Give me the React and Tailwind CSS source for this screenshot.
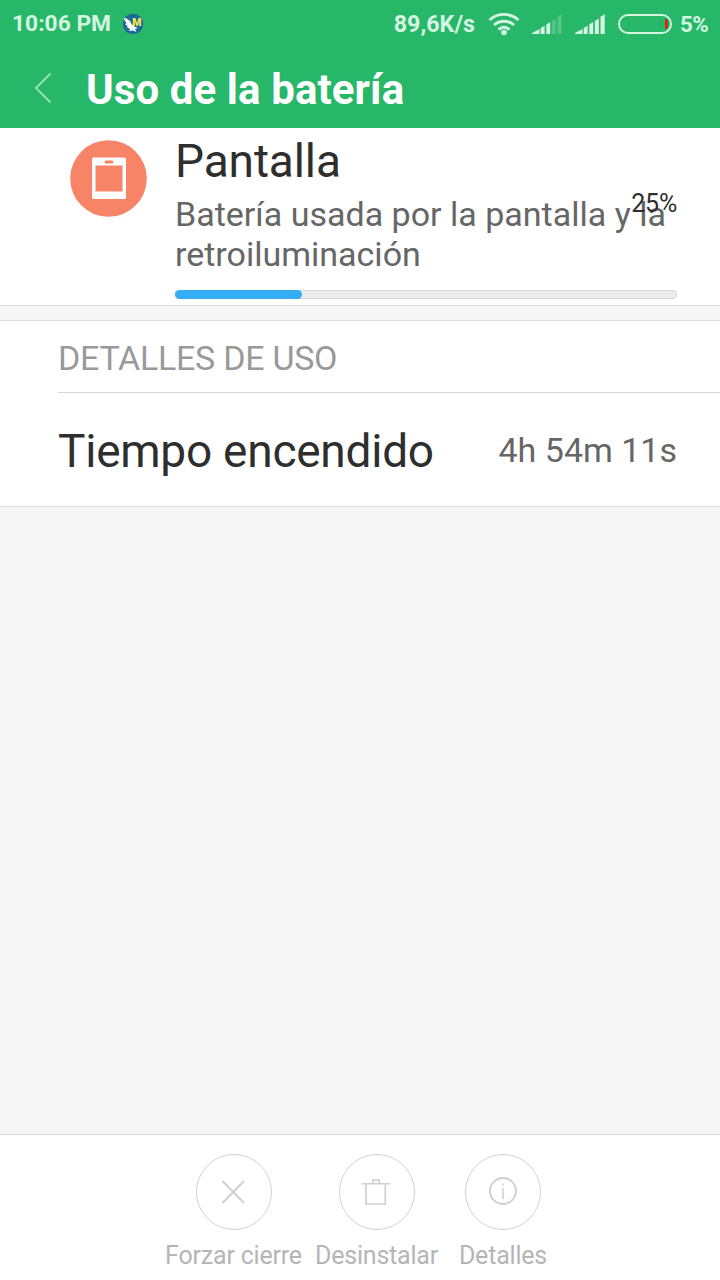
import { clsx } from 'clsx';

const ACTIONS = [
  { id: 'stop', label: 'Forzar cierre', width: 'w-[143px]', Icon: CloseIcon },
  { id: 'uninstall', label: 'Desinstalar', width: 'w-[143px]', Icon: TrashIcon },
  { id: 'details', label: 'Detalles', width: 'w-[110px]', Icon: InfoIcon },
];

function CloseIcon() {
  return (
    <svg viewBox="0 0 74 74" className="w-full h-full" fill="none" stroke="currentColor" strokeWidth="1.8">
      <path d="M25.5 26l21.5 22M47 26L25.5 48" />
    </svg>
  );
}

function TrashIcon() {
  return (
    <svg viewBox="0 0 74 74" className="w-full h-full" fill="none" stroke="currentColor" strokeWidth="1.6">
      <path d="M21.700 28.700h28.500M26 28.700v20.300h19.300V28.700M32.800 28.700v-3.700h6.500v3.700" />
    </svg>
  );
}

function InfoIcon() {
  return (
    <svg viewBox="0 0 74 74" className="w-full h-full" fill="none" stroke="currentColor">
      <circle cx="37" cy="36" r="13" strokeWidth="1.8" />
      <path d="M37 33v11M37 28.500v2" strokeWidth="1.5" />
    </svg>
  );
}

function SignalIcon({ level }) {
  const bars = [
    'M0 21v-1l7.500-4v5z',
    'M8.700 21v-6l3.900-2.200V21z',
    'M14.300 21v-9.500l3.900-2.500V21z',
    'M19.900 21V8l3.900-2.600V21z',
    'M25.500 21V3.800L29.700 1v20z',
  ];
  return (
    <svg viewBox="0 0 30 22" className="w-[30px] h-[22px] fill-current">
      {bars.map((d, i) => (
        <path key={d} d={d} opacity={i < level ? 1 : 0.25} />
      ))}
    </svg>
  );
}

function StatusBar() {
  return (
    <div className="flex items-center h-12 pl-3 text-[22.8px] font-bold text-[#d4f5e0]">
      <span className="w-[99px] pt-px whitespace-nowrap">10:06 PM</span>
      <svg viewBox="0 0 22 22" className="w-[22px] h-[22px] ml-[11px]">
        <circle cx="11" cy="11" r="10.200" fill="#1d6898" />
        <path d="M1.500 5l3 .5 3.500 2.500 2 4 2-1v2.500l4 1.500-3 1 1.500 3-3.500-1.500-4 .500 1-2-3.500-2 1.500-.5-3-2.500 1.500-.5z" fill="#fff" />
        <text x="10.300" y="12.800" fontSize="10.500" fontWeight="900" fill="#f3e94b">M</text>
      </svg>
      <span className="ml-auto pt-px text-[23.3px] whitespace-nowrap">89,6K/s</span>
      <svg viewBox="0 0 32 24" className="w-8 h-6 ml-[13px]" fill="none" stroke="currentColor" strokeWidth="2.8">
        <path d="M1.500 8c8.500-7.500 20.500-7.500 29 0M6 13c6-5 14-5 20 0M10.500 17.600c3.500-2.900 7.500-2.900 11 0" />
        <circle cx="16" cy="20.500" r="2.800" fill="currentColor" stroke="none" />
      </svg>
      <div className="ml-3"><SignalIcon level={3} /></div>
      <div className="ml-[13px]"><SignalIcon level={5} /></div>
      <div className="flex items-center justify-end w-[54px] h-5 ml-[13px] pr-0.5 border-2 border-current rounded-full">
        <div className="w-[3.5px] h-2.5 rounded-r bg-[#e0220a]" />
      </div>
      <span className="w-12 pl-2 pt-px text-[22.3px] tracking-[-0.6px]">5%</span>
    </div>
  );
}

export default function App() {
  return (
    <div className="flex flex-col w-full h-screen overflow-hidden bg-[#f6f6f6] font-[Roboto,sans-serif] text-[#2e2e2e]">
      <header className="h-32 shrink-0 bg-[#27b768]">
        <StatusBar />
        <div className="flex items-center h-20 pl-[34px]">
          <svg viewBox="0 0 18 32" className="w-[18px] h-8" fill="none" stroke="#93dfb4" strokeWidth="2">
            <path d="M16.500 1.500L2 16l14.500 14.500" />
          </svg>
          <h1 className="pt-1 ml-[34px] text-[42px] leading-[50px] font-bold tracking-[0.1px] text-white whitespace-nowrap">Uso de la batería</h1>
        </div>
      </header>

      <section className="flex h-[178px] shrink-0 pl-[70px] pr-[43px] bg-white border-b border-[#dedede]">
        <svg viewBox="0 0 77 77" className="w-[77px] h-[77px] mt-3 shrink-0">
          <circle cx="38.500" cy="38.500" r="38.300" fill="#f78466" />
          <rect x="22" y="17.500" width="34" height="41.500" rx="1.500" fill="#fff" />
          <rect x="25.500" y="25.500" width="27" height="26" fill="#f78466" />
          <rect x="34.500" y="20.500" width="9" height="3" rx="1.500" fill="#f78466" />
        </svg>
        <div className="relative flex-1 ml-7">
          <h2 className="pt-1.5 text-[46px] leading-[54px] tracking-[-0.1px]">Pantalla</h2>
          <p className="mt-1.5 text-[34px] leading-10 text-[#666] whitespace-nowrap">
            Batería usada por la pantalla y la<br />retroiluminación
          </p>
          <span className="absolute right-0 top-[61px] text-[25px] leading-[30px] tracking-[-0.2px]">25%</span>
          <div className="h-[9px] mt-4 rounded-full bg-[#ececec] inset-ring inset-ring-[#d8d8d8]">
            <div className="w-[25.2%] h-full bg-[#33aef5] rounded-full" />
          </div>
        </div>
      </section>

      <section className="h-[187px] shrink-0 mt-3.5 bg-white border-y border-[#dedede]">
        <h3 className="h-[72px] ml-[58px] pt-0.5 border-b border-[#d6d6d6] text-[34px] leading-[71px] tracking-[-0.28px] text-[#999]">DETALLES DE USO</h3>
        <div className="flex items-center justify-between h-[113px] pl-[58px] pr-[43px] whitespace-nowrap">
          <span className="pt-1 text-[46px] tracking-[-0.25px]">Tiempo encendido</span>
          <span className="pt-0.5 text-[34px] text-[#666]">4h 54m 11s</span>
        </div>
      </section>

      <footer className="flex justify-center h-[146px] shrink-0 mt-auto pt-[19px] bg-white border-t border-[#d5d5d5]">
        {ACTIONS.map(({ id, label, width, Icon }) => (
          <button key={id} className={clsx('flex flex-col items-center shrink-0 text-[#b5b5b5]', width)}>
            <span className="w-[76px] h-[76px] border border-[#d2d2d2] rounded-full text-[#cecece]">
              <Icon />
            </span>
            <span className="mt-2.5 text-[25px] leading-8 tracking-[-0.2px] whitespace-nowrap">{label}</span>
          </button>
        ))}
      </footer>
    </div>
  );
}
